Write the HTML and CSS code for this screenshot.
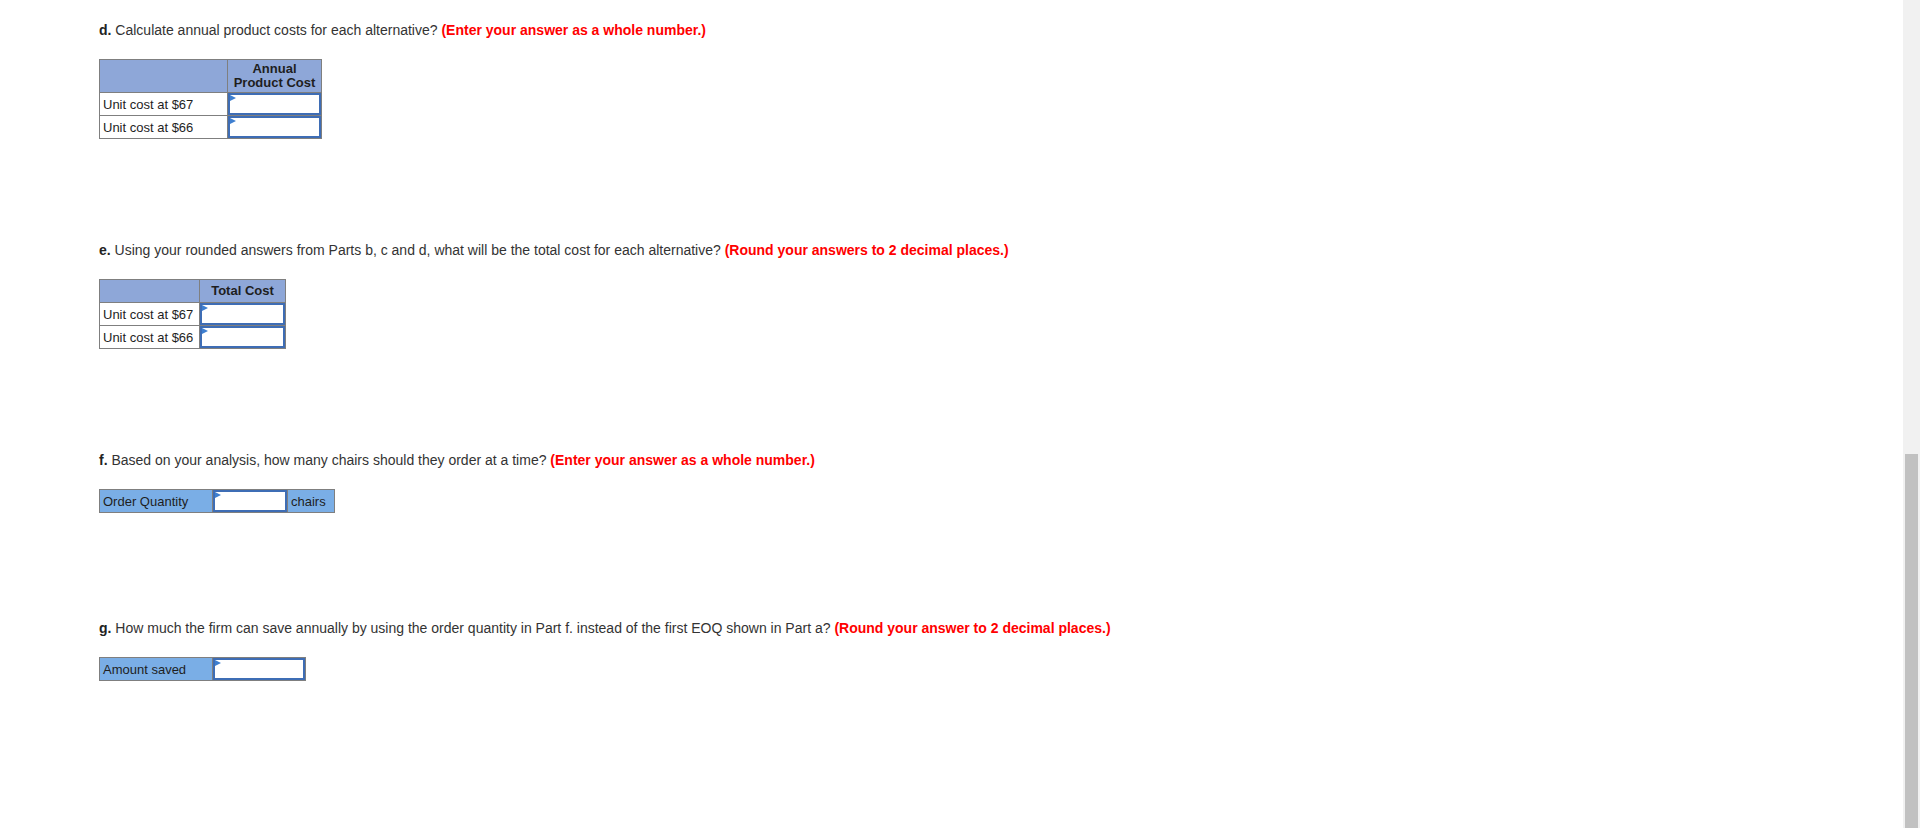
FILE: index.html
```html
<!DOCTYPE html>
<html lang="en">
<head>
    <meta charset="UTF-8">
    <title>Inventory Alternatives</title>
    <link rel="stylesheet" href="styles.css">
</head>
<body>
    <div class="page">
        <div class="part">
            <p class="question"><b>d.</b> Calculate annual product costs for each alternative? <span class="hint">(Enter your answer as a whole number.)</span></p>
            <table class="grid grid-d">
                <colgroup><col class="c-label"><col class="c-value"></colgroup>
                <tr class="head">
                    <th></th>
                    <th>Annual<br>Product Cost</th>
                </tr>
                <tr>
                    <td class="label">Unit cost at $67</td>
                    <td class="entry"><div class="box"></div></td>
                </tr>
                <tr>
                    <td class="label">Unit cost at $66</td>
                    <td class="entry"><div class="box"></div></td>
                </tr>
            </table>
        </div>

        <div class="part">
            <p class="question"><b>e.</b> Using your rounded answers from Parts b, c and d, what will be the total cost for each alternative? <span class="hint">(Round your answers to 2 decimal places.)</span></p>
            <table class="grid grid-e">
                <colgroup><col class="c-label"><col class="c-value"></colgroup>
                <tr class="head">
                    <th></th>
                    <th>Total Cost</th>
                </tr>
                <tr>
                    <td class="label">Unit cost at $67</td>
                    <td class="entry"><div class="box"></div></td>
                </tr>
                <tr>
                    <td class="label">Unit cost at $66</td>
                    <td class="entry"><div class="box"></div></td>
                </tr>
            </table>
        </div>

        <div class="part">
            <p class="question"><b>f.</b> Based on your analysis, how many chairs should they order at a time? <span class="hint">(Enter your answer as a whole number.)</span></p>
            <table class="grid grid-f">
                <colgroup><col class="c-label"><col class="c-value"><col class="c-unit"></colgroup>
                <tr>
                    <td class="label blue">Order Quantity</td>
                    <td class="entry"><div class="box"></div></td>
                    <td class="label blue">chairs</td>
                </tr>
            </table>
        </div>

        <div class="part part-last">
            <p class="question"><b>g.</b> How much the firm can save annually by using the order quantity in Part f. instead of the first EOQ shown in Part a? <span class="hint">(Round your answer to 2 decimal places.)</span></p>
            <table class="grid grid-g">
                <colgroup><col class="c-label"><col class="c-value"></colgroup>
                <tr>
                    <td class="label blue">Amount saved</td>
                    <td class="entry"><div class="box"></div></td>
                </tr>
            </table>
        </div>
    </div>

    <div class="scrollbar"><div class="thumb"></div></div>
</body>
</html>
```

FILE: styles.css
```css
body {
    margin: 0;
    font-family: "Liberation Sans", Arial, sans-serif;
    color: #333333;
    background-color: #ffffff;
}

.page {
    padding: 20px 0 0 99px;
}

.part {
    margin-bottom: 101px;
}

.part-last {
    padding-top: 4px;  /* g sits a little lower */
}

.question {
    margin: 0 0 19px 0;
    font-size: 14px;
    line-height: 20px;
}

.question b {
    color: #222222;
}

.hint {
    color: #ff0000;
    font-weight: bold;
}

.grid {
    border-collapse: collapse;
    table-layout: fixed;
    font-size: 13px;
    color: #1e1e1e;
}

.grid td,
.grid th {
    border: 1px solid #7f7f7f;
    padding: 0 3px;
    height: 22px;
    white-space: nowrap;
}

.grid .head th {
    background-color: #8ea7d8;
    font-weight: bold;
    text-align: center;
    line-height: 14px;
}

.grid-d .head th {
    height: 32px;
}

.grid .label {
    background-color: #ffffff;
}

.grid .label.blue {
    background-color: #7aaee6;
}

.grid .entry {
    padding: 0;
    position: relative;
    background-color: #ffffff;
}

.box {
    height: 18px;
    border: 2px solid #3e6db5;
    background-color: #ffffff;
}

.entry::before {
    content: "";
    position: absolute;
    left: 2px;
    top: 2px;
    border-top: 3px solid transparent;
    border-bottom: 3px solid transparent;
    border-left: 6px solid #3e7fd0;
}

.grid-d { width: 222px; }
.grid-d .c-label { width: 128px; }
.grid-d .c-value { width: 94px; }

.grid-e { width: 186px; }
.grid-e .c-label { width: 100px; }
.grid-e .c-value { width: 86px; }

.grid-f { width: 235px; }
.grid-f .c-label { width: 113px; }
.grid-f .c-value { width: 75px; }
.grid-f .c-unit { width: 47px; }

.grid-g { width: 206px; }
.grid-g .c-label { width: 113px; }
.grid-g .c-value { width: 93px; }

.scrollbar {
    position: fixed;
    top: 0;
    right: 0;
    width: 17px;
    height: 100%;
    background-color: #f1f1f1;
}

.thumb {
    position: absolute;
    left: 2px;
    right: 2px;
    top: 454px;
    bottom: 0;
    background-color: #c1c1c1;
}
```
